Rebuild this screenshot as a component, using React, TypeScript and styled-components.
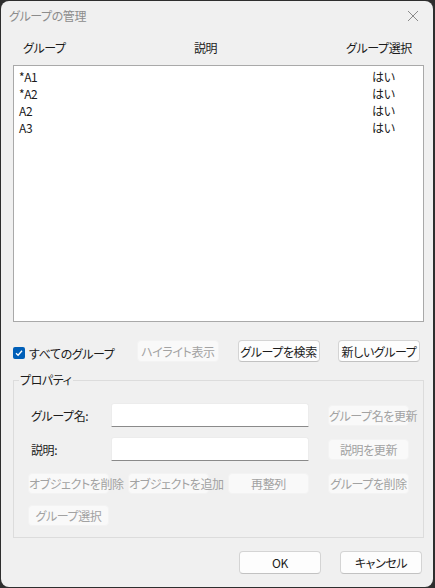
import React from 'react';
import styled, { createGlobalStyle } from 'styled-components';

const GlobalStyle = createGlobalStyle`
  html, body {
    margin: 0;
    padding: 0;
    background: #2e2e2e;
  }
  body {
    font-family: "Noto Sans CJK JP", "Noto Sans", sans-serif;
    font-size: 12px;
    font-feature-settings: "palt";
    letter-spacing: -0.4px;
    color: #1b1b1b;
  }
`;

const Window = styled.div`
  box-sizing: border-box;
  width: 432px;
  height: 586px;
  margin: 1px 0 0 1px;
  background: #f0f0f0;
  border-radius: 8px;
  display: flex;
  flex-direction: column;
  overflow: hidden;
`;

const TitleBar = styled.div`
  height: 29px;
  flex: none;
  display: flex;
  align-items: center;
  justify-content: space-between;
  padding: 0 8px 0 8px;
`;

const Title = styled.span`
  color: #8c8c8c;
  font-size: 12px;
`;

const CloseButton = styled.div`
  width: 24px;
  height: 24px;
  display: flex;
  align-items: center;
  justify-content: center;
`;

const Body = styled.div`
  flex: 1;
  display: flex;
  flex-direction: column;
  padding: 0 9px 0 12px;
`;

const Columns = styled.div`
  display: grid;
  grid-template-columns: 171px 152px auto;
  align-items: center;
`;

const HeaderRow = styled(Columns)`
  height: 35px;
  padding-left: 10px;
`;

const ListBox = styled.div`
  box-sizing: border-box;
  height: 257px;
  background: #ffffff;
  border: 1px solid #a9a9a9;
  padding: 2px 0 0 5px;
`;

const ListRow = styled.div`
  display: grid;
  grid-template-columns: 353px auto;
  height: 17px;
  align-items: center;
  line-height: 17px;
`;

const ActionRow = styled.div`
  display: flex;
  align-items: center;
  margin-top: 18px;
  height: 22px;
`;

const CheckLabel = styled.label`
  width: 124px;
  display: flex;
  align-items: center;
  gap: 4px;
  margin-top: 4px;
`;

const CheckBox = styled.span`
  width: 12px;
  height: 12px;
  border-radius: 2px;
  background: #005fb8;
  display: flex;
  align-items: center;
  justify-content: center;
`;

const ButtonGroup = styled.div<{ $gap?: number }>`
  display: flex;
  gap: ${p => p.$gap ?? 18.5}px;
`;

const Button = styled.button<{ $width?: number; $height?: number }>`
  box-sizing: border-box;
  width: ${p => p.$width ?? 82}px;
  height: ${p => p.$height ?? 22}px;
  padding: 0;
  font-family: inherit;
  font-size: 12px;
  font-feature-settings: "palt";
  letter-spacing: -0.4px;
  color: #1b1b1b;
  background: #fdfdfd;
  border: 1px solid #d4d4d4;
  border-bottom-color: #c2c2c2;
  border-radius: 4px;
  white-space: nowrap;

  &:disabled {
    color: #a2a2a2;
    background: #f9f9f9;
    border-color: #f3f3f3;
  }
`;

const Properties = styled.fieldset`
  margin: 12px 0 0 0;
  padding: 9px 13px 11px 14px;
  border: 1px solid #dcdcdc;
  border-radius: 0;
  display: flex;
  flex-direction: column;
`;

const Legend = styled.legend`
  padding: 0 1px;
  margin-left: -9px;
  line-height: 12px;
`;

const FieldRow = styled.div<{ $top?: number }>`
  display: flex;
  align-items: center;
  margin-top: ${p => p.$top ?? 0}px;
`;

const FieldLabel = styled.span`
  width: 83px;
  box-sizing: border-box;
  padding-left: 3px;
`;

const TextInput = styled.div`
  box-sizing: border-box;
  width: 198px;
  height: 24px;
  background: #ffffff;
  border: 1px solid #ececec;
  border-bottom: 1px solid #8a8a8a;
  border-radius: 3px 3px 0 0;
  margin-right: 19px;
`;

const Footer = styled.div`
  display: flex;
  justify-content: flex-end;
  gap: 19px;
  padding: 13px 2px 0 0;
`;

const rows = [
  { name: '*A1', selected: 'はい' },
  { name: '*A2', selected: 'はい' },
  { name: 'A2', selected: 'はい' },
  { name: 'A3', selected: 'はい' },
];

export default function App() {
  return (
    <>
      <GlobalStyle />
      <Window>
        <TitleBar>
          <Title>グループの管理</Title>
          <CloseButton>
            <svg width="12" height="12" viewBox="0 0 12 12">
              <path d="M1 1 L11 11 M11 1 L1 11" stroke="#8a8a8a" strokeWidth="1" fill="none" />
            </svg>
          </CloseButton>
        </TitleBar>
        <Body>
          <HeaderRow>
            <span>グループ</span>
            <span>説明</span>
            <span>グループ選択</span>
          </HeaderRow>
          <ListBox>
            {rows.map(r => (
              <ListRow key={r.name}>
                <span>{r.name}</span>
                <span>{r.selected}</span>
              </ListRow>
            ))}
          </ListBox>
          <ActionRow>
            <CheckLabel>
              <CheckBox>
                <svg width="10" height="10" viewBox="0 0 10 10">
                  <path d="M2 5.2 L4.1 7.2 L8 2.8" stroke="#ffffff" strokeWidth="1.3" fill="none" />
                </svg>
              </CheckBox>
              すべてのグループ
            </CheckLabel>
            <ButtonGroup>
              <Button disabled>ハイライト表示</Button>
              <Button>グループを検索</Button>
              <Button>新しいグループ</Button>
            </ButtonGroup>
          </ActionRow>
          <Properties>
            <Legend>プロパティ</Legend>
            <FieldRow $top={8}>
              <FieldLabel>グループ名:</FieldLabel>
              <TextInput />
              <Button disabled $width={81} $height={21}>グループ名を更新</Button>
            </FieldRow>
            <FieldRow $top={10}>
              <FieldLabel>説明:</FieldLabel>
              <TextInput />
              <Button disabled $width={81} $height={21}>説明を更新</Button>
            </FieldRow>
            <FieldRow $top={12}>
              <ButtonGroup $gap={19}>
                <Button disabled $width={81} $height={21}>オブジェクトを削除</Button>
                <Button disabled $width={81} $height={21}>オブジェクトを追加</Button>
                <Button disabled $width={81} $height={21}>再整列</Button>
                <Button disabled $width={81} $height={21}>グループを削除</Button>
              </ButtonGroup>
            </FieldRow>
            <FieldRow $top={11}>
              <Button disabled $width={81} $height={21}>グループ選択</Button>
            </FieldRow>
          </Properties>
          <Footer>
            <Button $height={23}>OK</Button>
            <Button $height={23}>キャンセル</Button>
          </Footer>
        </Body>
      </Window>
    </>
  );
}
